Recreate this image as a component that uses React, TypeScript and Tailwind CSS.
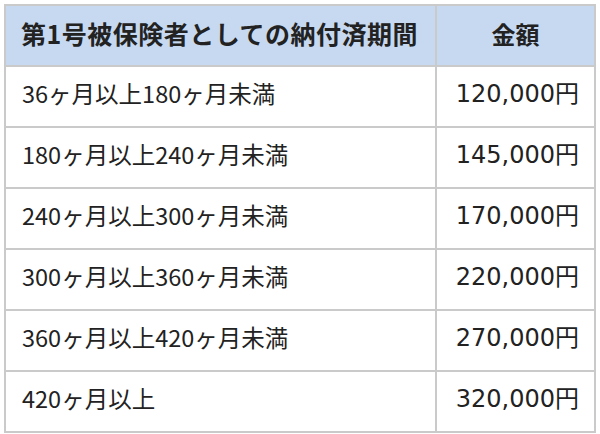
const rows = [
  ["36ヶ月以上180ヶ月未満", "120,000円"],
  ["180ヶ月以上240ヶ月未満", "145,000円"],
  ["240ヶ月以上300ヶ月未満", "170,000円"],
  ["300ヶ月以上360ヶ月未満", "220,000円"],
  ["360ヶ月以上420ヶ月未満", "270,000円"],
  ["420ヶ月以上", "320,000円"],
];

export default function App() {
  return (
    <div
      className="w-[600px] h-[434px] bg-white pt-[4px] pl-[4px]"
      style={{ fontFamily: '"Noto Sans CJK JP", "Noto Sans", sans-serif' }}
    >
      <table className="w-[592px] border-collapse text-[#222]">
        <thead>
          <tr className="h-[61px] bg-[#c6d9f1]">
            <th className="border-2 border-[#cacaca] text-left pl-[15px] pb-[4px] text-[25px] tracking-[0.5px] font-bold w-[431px]">
              第1号被保険者としての納付済期間
            </th>
            <th className="border-2 border-[#cacaca] text-center pb-[4px] text-[24px] font-bold">
              金額
            </th>
          </tr>
        </thead>
        <tbody>
          {rows.map(([period, amount]) => (
            <tr key={period} className="h-[61px]">
              <td className="border-2 border-[#cacaca] pl-[16px] pb-[5px] text-[23.5px]">
                {period}
              </td>
              <td
                className="border-2 border-[#cacaca] text-right pr-[15px] pb-[5px] text-[24px]"
                style={{ fontFamily: '"DejaVu Sans", "Noto Sans CJK JP", sans-serif' }}
              >
                {amount}
              </td>
            </tr>
          ))}
        </tbody>
      </table>
    </div>
  );
}
